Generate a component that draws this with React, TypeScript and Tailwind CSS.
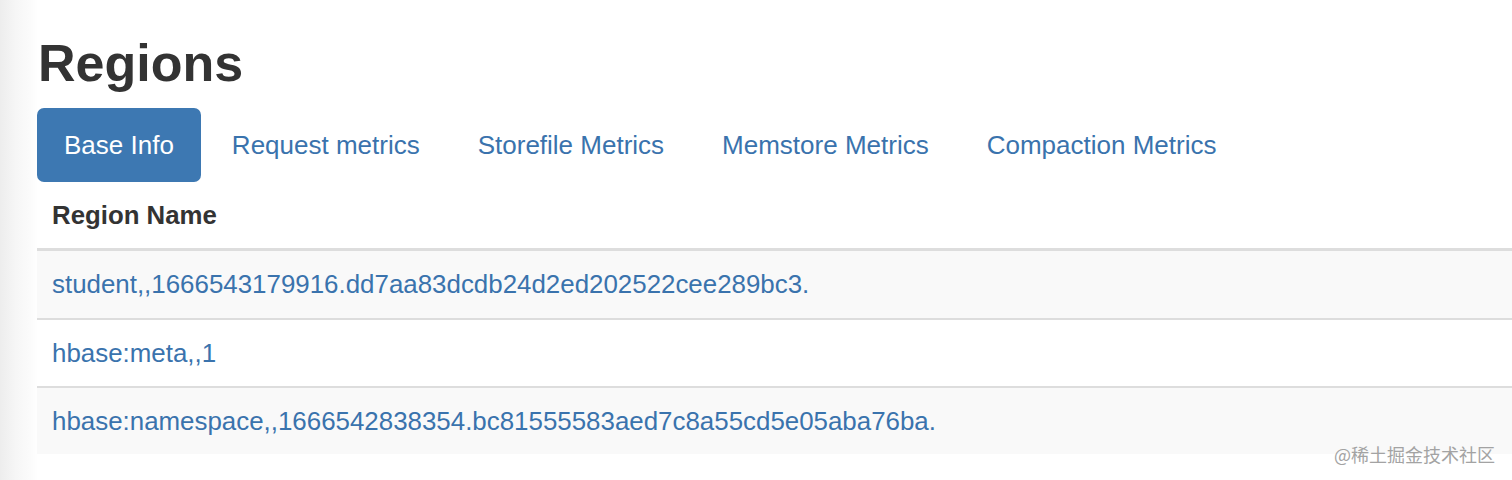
const tabs = ['Base Info', 'Request metrics', 'Storefile Metrics', 'Memstore Metrics', 'Compaction Metrics']

const regions = [
  'student,,1666543179916.dd7aa83dcdb24d2ed202522cee289bc3.',
  'hbase:meta,,1',
  'hbase:namespace,,1666542838354.bc81555583aed7c8a55cd5e05aba76ba.',
]

export default function App() {
  return (
    <div
      className="relative h-[480px] w-full overflow-hidden bg-[linear-gradient(to_right,#ededed_0px,#f6f6f6_16px,#fbfbfb_30px,#ffffff_38px)] pl-[37px] pt-[33px] text-[#333]"
      style={{ fontFamily: '"Liberation Sans", Arial, Helvetica, sans-serif' }}
    >
      <h1 className="text-[52px] font-bold leading-[60px] pl-[1px]">Regions</h1>

      <ul className="mt-[15px] flex gap-[4px]">
        {tabs.map((t, i) => (
          <li key={t}>
            <a
              href="#"
              className={`flex h-[74px] items-center rounded-[7px] px-[27px] text-[26px] ${
                i === 0 ? 'bg-[#3d78b2] text-white' : 'text-[#3a73ad]'
              }`}
            >
              {t}
            </a>
          </li>
        ))}
      </ul>

      {/* table */}
      <div className="bg-white">
        <div className="flex h-[69px] items-center border-b-[3px] border-[#ddd] px-[15px] text-[25.8px] font-bold">
          Region Name
        </div>
        {regions.map((r, i) => (
          <div
            key={r}
            className={`flex items-center px-[15px] text-[25.9px] ${i > 0 ? 'border-t-2 border-[#ddd] h-[68px]' : 'h-[67px]'} ${
              i % 2 === 0 ? 'bg-[#f9f9f9]' : 'bg-white'
            }`}
          >
            <a href="#" className="text-[#3a73ad]">{r}</a>
          </div>
        ))}
      </div>

      <div
        className="absolute right-[17px] top-[441px] text-[18px] text-[#a3a3a3]"
        style={{ fontFamily: '"Noto Sans CJK SC", "Liberation Sans", sans-serif' }}
      >
        @稀土掘金技术社区
      </div>
    </div>
  )
}
